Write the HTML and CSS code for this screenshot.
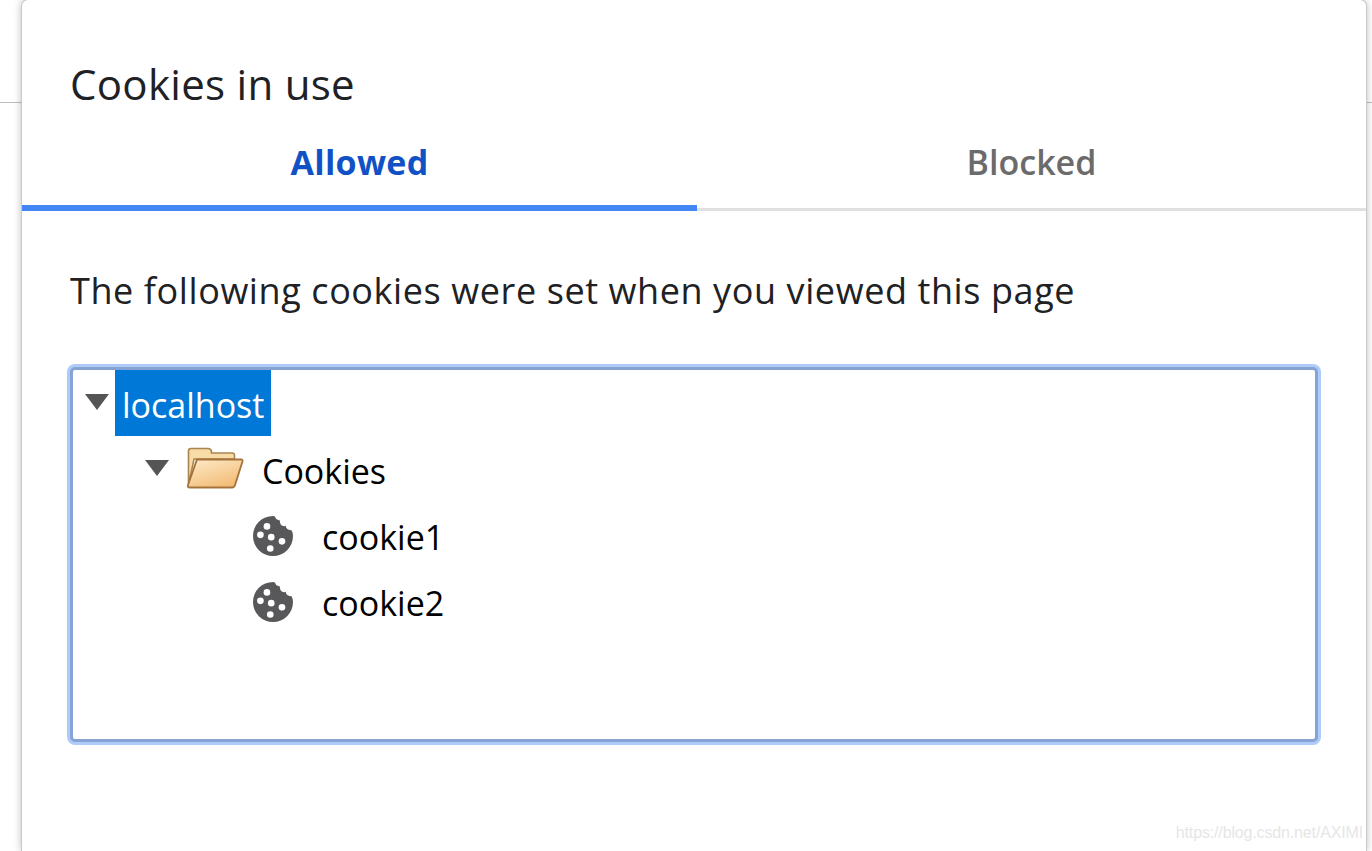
FILE: index.html
```html
<!DOCTYPE html>
<html lang="en">
<head>
<meta charset="utf-8">
<title>Cookies in use</title>
<link rel="stylesheet" href="styles.css">
</head>
<body>
<div class="page-top"></div>
<main class="dialog">
  <h1 class="title">Cookies in use</h1>
  <div class="tabs">
    <div class="tab active">Allowed</div>
    <div class="tab">Blocked</div>
  </div>
  <section class="content">
    <p class="desc">The following cookies were set when you viewed this page</p>
    <div class="tree">
      <div class="row level0">
        <svg class="arrow" viewBox="0 0 24 16"><path d="M0 0H24L12 16Z"/></svg>
        <span class="label selected">localhost</span>
      </div>
      <div class="row level1">
        <svg class="arrow" viewBox="0 0 24 16"><path d="M0 0H24L12 16Z"/></svg>
        <svg class="folder" viewBox="0 0 58 42">
          <defs>
            <linearGradient id="fg" x1="0" y1="0" x2="0.6" y2="1"><stop offset="0" stop-color="#fdeccb"/><stop offset="1" stop-color="#f3bd78"/></linearGradient>
          </defs>
          <path d="M2.500 38V4Q2.500 1.500 5 1.500H22Q25 1.500 25.500 4.500V6H46Q48.500 6 48.500 8.500V12H8Z" fill="#f8dca8" stroke="#a98550" stroke-width="1.600"/>
          <path d="M11 12.500H55Q57 12.500 56.500 14.500L49 38Q48.300 40.500 46 40.500H4Q1 40.500 2 38Z" fill="url(#fg)" stroke="#a5733a" stroke-width="1.800"/>
        </svg>
        <span class="label">Cookies</span>
      </div>
      <div class="row level2">
        <svg class="cookie" viewBox="0 0 41 41">
          <path d="M20.500 0Q22 0 22.500 .5Q23 3.500 26 4Q27 4 27.500 4.500Q27.500 10 32 10.500Q33 10.500 33.500 10Q34 14.500 39 14.500H39.500Q41 17 41 20.500A20.500 20.500 0 1 1 20.500 0Z" fill="#58585a"/>
          <g fill="#fff"><circle cx="14.300" cy="10.700" r="3.400"/><circle cx="7.600" cy="19.300" r="3.400"/><circle cx="18.700" cy="21.700" r="3.400"/><circle cx="29.700" cy="26" r="3.400"/><circle cx="17.700" cy="33.300" r="3.400"/></g>
        </svg>
        <span class="label">cookie1</span>
      </div>
      <div class="row level2">
        <svg class="cookie" viewBox="0 0 41 41">
          <path d="M20.500 0Q22 0 22.500 .5Q23 3.500 26 4Q27 4 27.500 4.500Q27.500 10 32 10.500Q33 10.500 33.500 10Q34 14.500 39 14.500H39.500Q41 17 41 20.500A20.500 20.500 0 1 1 20.500 0Z" fill="#58585a"/>
          <g fill="#fff"><circle cx="14.300" cy="10.700" r="3.400"/><circle cx="7.600" cy="19.300" r="3.400"/><circle cx="18.700" cy="21.700" r="3.400"/><circle cx="29.700" cy="26" r="3.400"/><circle cx="17.700" cy="33.300" r="3.400"/></g>
        </svg>
        <span class="label">cookie2</span>
      </div>
    </div>
  </section>
</main>
<div class="watermark">https://blog.csdn.net/AXIMI</div>
</body>
</html>
```
FILE: styles.css
```css
html, body {
  margin: 0;
  height: 851px;
  overflow: hidden;
  background: #fff;
  font-family: "Open Sans", "Noto Sans", sans-serif;
}
.page-top {
  height: 102px;
  border-bottom: 1px solid #bdbdbd;
}
.dialog {
  position: absolute;
  left: 22px;
  top: 0;
  width: 1344px;
  height: 851px;
  background: #fff;
  border-radius: 6px 6px 0 0;
  box-shadow: 0 0 0 1px #c9c9c9, 0 0 9px rgba(0, 0, 0, .32);
}
.title {
  margin: 0;
  padding: 59px 0 0 48px;
  height: 65px;
  font-size: 42px;
  line-height: 50px;
  font-weight: 400;
  color: #202124;
  letter-spacing: .3px;
}
.tabs {
  display: grid;
  grid-template-columns: 675px 669px;
  height: 87px;
}
.tab {
  height: 84px;
  line-height: 76px;
  text-align: center;
  font-size: 34px;
  font-weight: 600;
  color: #6b6b6b;
  border-bottom: 3px solid #e0e0e0;
}
.tab.active {
  height: 81px;
  color: #1151c6;
  font-weight: 700;
  letter-spacing: .3px;
  border-bottom: 6px solid #4285f4;
}
.content {
  padding: 0 46px 0 48px;
}
.desc {
  margin: 0;
  padding-top: 55px;
  height: 99px;
  font-size: 36px;
  line-height: 50px;
  color: #202124;
  letter-spacing: .59px;
}
.tree {
  box-sizing: border-box;
  width: 1248px;
  height: 375px;
  margin-top: 2px;
  border: 3px solid #87a3d3;
  border-radius: 5px;
  box-shadow: 0 0 0 3px #aecbfa;
  background: #fff;
}
.row {
  display: flex;
  align-items: center;
  height: 66px;
  color: #000;
  font-size: 34px;
}
.level0 { padding-left: 12px; }
.level1 { padding-left: 72px; }
.level2 { padding-left: 180px; }
.arrow {
  width: 24px;
  height: 16px;
  fill: #555;
  margin-top: -2px;
}
.level0 .arrow { margin-right: 6px; }
.folder {
  width: 58px;
  height: 42px;
  margin: -2px 18px 0 17px;
  flex: none;
}
.cookie {
  width: 40px;
  height: 40px;
  margin-right: 29px;
  margin-top: 2px;
  flex: none;
}
.label {
  display: block;
  height: 66px;
  line-height: 70px;
}
.selected {
  background: #0078d7;
  color: #fff;
  padding: 0 7px;
}
.watermark {
  position: absolute;
  right: 9px;
  top: 823px;
  font-family: "Liberation Sans", sans-serif;
  font-size: 16px;
  letter-spacing: -.15px;
  line-height: 20px;
  color: #e6e6e6;
}
```
